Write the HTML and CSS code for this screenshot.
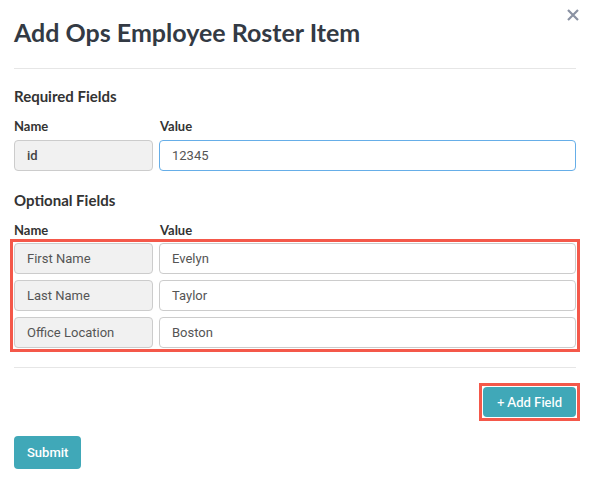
FILE: index.html
```html
<!DOCTYPE html>
<html>
<head>
<meta charset="utf-8">
<link rel="stylesheet" href="styles.css">
</head>
<body>
<div class="modal">
  <div class="header">
    <h1 class="title">Add Ops Employee Roster Item</h1>
    <button class="close" aria-label="Close">
      <svg width="12" height="12" viewBox="0 0 12 12"><path d="M1 1 L11 11 M11 1 L1 11" stroke="#8a92a3" stroke-width="2.2" stroke-linecap="butt"/></svg>
    </button>
  </div>
  <hr class="rule rule-top">
  <h2 class="section">Required Fields</h2>
  <div class="grid labels"><span>Name</span><span>Value</span></div>
  <div class="grid row">
    <div class="name bold">id</div>
    <div class="value focus">12345</div>
  </div>
  <h2 class="section section-opt">Optional Fields</h2>
  <div class="grid labels"><span>Name</span><span>Value</span></div>
  <div class="rows">
    <div class="grid row">
      <div class="name">First Name</div>
      <div class="value">Evelyn</div>
    </div>
    <div class="grid row">
      <div class="name">Last Name</div>
      <div class="value">Taylor</div>
    </div>
    <div class="grid row">
      <div class="name">Office Location</div>
      <div class="value">Boston</div>
    </div>
  </div>
  <hr class="rule rule-bottom">
  <div class="add-wrap"><span class="highlight"><button class="btn add">+ Add Field</button></span></div>
  <button class="btn submit">Submit</button>
</div>
</body>
</html>
```
FILE: styles.css
```css
html, body { margin: 0; padding: 0; background: #fff; }
body { font-family: Lato, "Noto Sans", sans-serif; color: #333; }
.modal { padding: 0 15px 0 14px; }
.header { display: flex; justify-content: space-between; align-items: flex-start; }
.title { margin: 17px 0 0 0; font-size: 25px; line-height: 1.2; font-weight: 700; color: #333a44; }
.close { margin: 9px -3px 0 0; padding: 0; border: 0; background: none; width: 12px; height: 12px; display: block; }
.close svg { display: block; }
.rule { border: 0; border-top: 1px solid #e6e6e6; margin: 0; height: 0; }
.rule-top { margin-top: 21px; }
.section { margin: 18px 0 0 0; font-size: 15px; line-height: 18px; font-weight: 700; color: #333; }
.section-opt { margin-top: 20px; }
.grid { display: grid; grid-template-columns: 139px 1fr; column-gap: 6px; }
.labels { margin-top: 13px; font-size: 13px; line-height: 16px; font-weight: 700; color: #333; }
.labels span:last-child { padding-left: 1px; }
.row { margin-top: 6px; }
.name, .value { box-sizing: border-box; height: 31px; border: 1px solid #cccccc; border-radius: 4px; padding: 0 12px; font-family: Roboto, "Liberation Sans", sans-serif; font-size: 13px; line-height: 29px; color: #555; }
.name { background: #f1f1f1; }
.value { background: #fff; }
.bold { font-weight: 500; color: #444; }
.focus { border-color: #66aee8; }
.rows { margin-top: 5px; outline: 3px solid #f4584a; outline-offset: 1px; display: flex; flex-direction: column; gap: 6px; }
.rows .row { margin-top: 0; }
.rule-bottom { margin-top: 19px; }
.add-wrap { display: flex; justify-content: flex-end; margin-top: 15px; margin-right: -4px; }
.highlight { display: block; border: 3px solid #f4584a; padding: 1px; }
.btn { border: 0; border-radius: 4px; background: #40a8b8; color: #fff; font-size: 13px; padding: 0 13px; cursor: pointer; }
.add { display: block; height: 30px; font-family: Lato, "Noto Sans", sans-serif; font-weight: 600; padding: 0 14px; }
.submit { display: block; margin-top: 15px; height: 33px; font-family: Roboto, "Liberation Sans", sans-serif; font-weight: 500; }
```
